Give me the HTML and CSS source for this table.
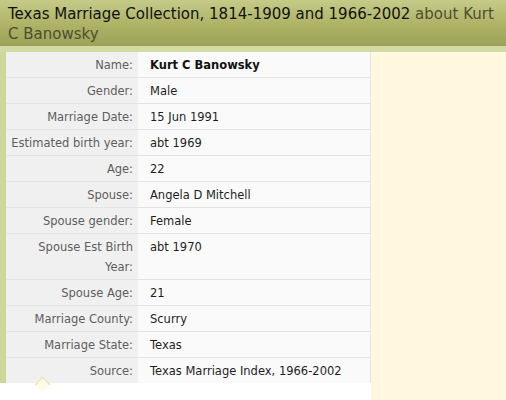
FILE: index.html
```html
<!DOCTYPE html>
<html>
<head>
<meta charset="utf-8">
<link rel="stylesheet" href="styles.css">
</head>
<body>
<div class="header">
  <h1 class="title">Texas Marriage Collection, 1814-1909 and 1966-2002 <span class="about">about Kurt</span> <span class="about">C Banowsky</span></h1>
</div>
<div class="strip"></div>
<div class="main">
  <div class="panel">
    <table class="record">
      <tr><th>Name:</th><td><b>Kurt C Banowsky</b></td></tr>
      <tr><th>Gender:</th><td>Male</td></tr>
      <tr><th>Marriage Date:</th><td>15 Jun 1991</td></tr>
      <tr><th>Estimated birth year:</th><td>abt 1969</td></tr>
      <tr><th>Age:</th><td>22</td></tr>
      <tr><th>Spouse:</th><td>Angela D Mitchell</td></tr>
      <tr><th>Spouse gender:</th><td>Female</td></tr>
      <tr><th>Spouse Est Birth Year:</th><td>abt 1970</td></tr>
      <tr><th>Spouse Age:</th><td>21</td></tr>
      <tr><th>Marriage County:</th><td>Scurry</td></tr>
      <tr><th>Marriage State:</th><td>Texas</td></tr>
      <tr><th>Source:</th><td>Texas Marriage Index, 1966-2002</td></tr>
    </table>
    <span class="caret"></span>
  </div>
  <div class="side"></div>
</div>
</body>
</html>
```

FILE: styles.css
```css
html, body {
  margin: 0;
  padding: 0;
  background: #ffffff;
  font-family: "DejaVu Sans", Verdana, sans-serif;
}
.header {
  height: 46px;
  box-sizing: border-box;
  padding: 4px 8px 0 8px;
  background: linear-gradient(to bottom, #c5ca88 0%, #adb265 55%, #9ca258 100%);
}
.title {
  margin: 0;
  font-size: 15px;
  line-height: 20px;
  font-weight: normal;
  color: #111111;
}
.about {
  color: #4e4e30;
}
.strip {
  height: 6px;
  background: #d3dba5;
}
.main {
  display: flex;
  height: 348px;
}
.panel {
  position: relative;
  width: 364px;
  border-left: 6px solid #cdd69b;
  border-right: 1px solid #e6e6e6;
  background: #fafafa;
  align-self: flex-start;
}
.side {
  flex: 1;
  background: #fff8de;
}
.record {
  border-collapse: collapse;
  width: 100%;
  font-size: 11.5px;
}
.record th {
  width: 132px;
  box-sizing: border-box;
  background: #f0f0f0;
  color: #5e5e5e;
  font-weight: normal;
  text-align: right;
  vertical-align: top;
  padding: 3px 5px 2px 3px;
  line-height: 20px;
}
.record td {
  color: #1e1e1e;
  vertical-align: top;
  padding: 3px 5px 2px 12px;
  line-height: 20px;
}
.record tr + tr th,
.record tr + tr td {
  border-top: 1px solid #e4e4e4;
}
.record b {
  color: #111111;
}
.caret {
  position: absolute;
  left: 31px;
  bottom: -7px;
  width: 10px;
  height: 10px;
  border-left: 1px solid #e8dfa8;
  border-top: 1px solid #e8dfa8;
  background: #fffbe8;
  transform: rotate(45deg);
}
```
